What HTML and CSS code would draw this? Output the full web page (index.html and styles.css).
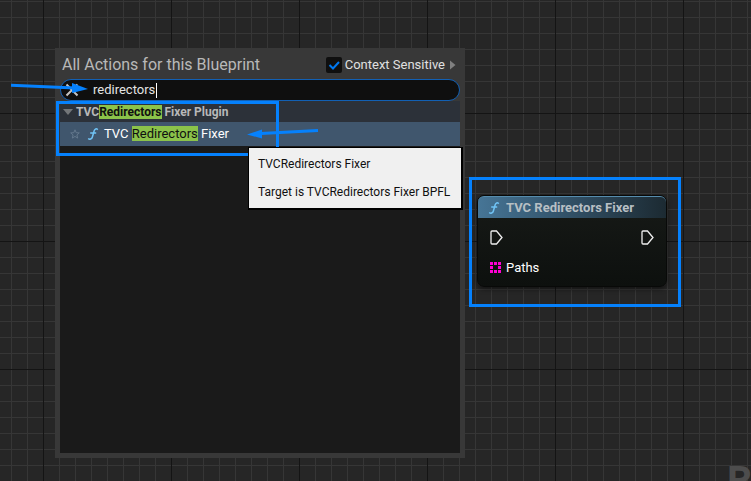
FILE: index.html
```html
<!DOCTYPE html>
<html lang="en">
<head>
<meta charset="utf-8">
<title>Blueprint actions</title>
<link rel="stylesheet" href="styles.css">
</head>
<body>
<main class="canvas">
  <section class="menu">
    <header class="menu-head">
      <h1 class="menu-title">All Actions for this Blueprint</h1>
      <label class="context" for="context"><input class="check" type="checkbox" id="context" checked>Context Sensitive</label>
      <svg class="expand" width="6" height="10" viewBox="0 0 6 10" aria-hidden="true"><path d="M0 0.5L5.5 5L0 9.5Z" fill="#808080"/></svg>
    </header>
    <div class="search">
      <button class="clear" type="button" aria-label="Clear search"><svg width="14" height="14" viewBox="0 0 14 14"><path d="M1.5 1.5L12.5 12.5M12.5 1.5L1.5 12.5" stroke="#c4c4c4" stroke-width="2"/></svg></button>
      <input class="query" type="text" aria-label="Search actions" value="redirectors">
      <span class="caret"></span>
    </div>
    <div class="results">
      <div class="category">
        <svg width="10" height="6" viewBox="0 0 10 6" aria-hidden="true"><path d="M0 0H10L5 6Z" fill="#737679"/></svg>
        <span>TVC<mark>Redirectors</mark> Fixer Plugin</span>
      </div>
      <div class="action">
        <svg class="star" width="10" height="10" viewBox="0 0 10 10" aria-hidden="true"><path d="M5 0.8L6.2 3.7L9.3 3.9L6.9 5.9L7.7 9.1L5 7.4L2.3 9.1L3.1 5.9L0.7 3.9L3.8 3.7Z" fill="none" stroke="#64788d"/></svg>
        <svg class="func" width="12" height="12" viewBox="0 0 12 12" aria-hidden="true"><path d="M10.7 1.7C9.5 0.2 7.7 0.8 7.1 3L5.3 9.2C4.8 11.1 2.6 11.8 1.2 10.5M3.2 5H9.2" fill="none" stroke="#70c3f5" stroke-width="1.5"/></svg>
        <span>TVC <mark>Redirectors</mark> Fixer</span>
      </div>
    </div>
  </section>

  <section class="node">
    <header class="node-head">
      <svg class="func" width="12" height="12" viewBox="0 0 12 12" aria-hidden="true"><path d="M10.7 1.7C9.5 0.2 7.7 0.8 7.1 3L5.3 9.2C4.8 11.1 2.6 11.8 1.2 10.5M3.2 5H9.2" fill="none" stroke="#70c3f5" stroke-width="1.5"/></svg>
      <h2 class="node-title">TVC Redirectors Fixer</h2>
    </header>
    <div class="pins">
      <svg width="13" height="15" viewBox="0 0 13 15" aria-hidden="true"><path d="M1 2Q1 1 2 1H6.5L12 7.5L6.5 14H2Q1 14 1 13Z" fill="none" stroke="#eee" stroke-width="1.3"/></svg>
      <svg width="13" height="15" viewBox="0 0 13 15" aria-hidden="true"><path d="M1 2Q1 1 2 1H6.5L12 7.5L6.5 14H2Q1 14 1 13Z" fill="none" stroke="#eee" stroke-width="1.3"/></svg>
    </div>
    <div class="param">
      <svg width="11" height="11" viewBox="0 0 11 11" aria-hidden="true"><path d="M0 0h3v3H0zM4 0h3v3H4zM8 0h3v3H8zM0 4h3v3H0zM8 4h3v3H8zM0 8h3v3H0zM4 8h3v3H4zM8 8h3v3H8z" fill="#ff00d4"/></svg>
      <span>Paths</span>
    </div>
  </section>

  <div class="box box-result"></div>
  <div class="box box-node"></div>
  <svg class="arrow arrow-search" width="80" height="14" viewBox="0 0 80 14" aria-hidden="true"><path d="M0 3.2L64 6" stroke="#0581fd" stroke-width="3"/><path d="M61 1L77 7L61 11Z" fill="#0581fd"/></svg>
  <svg class="arrow arrow-action" width="72" height="14" viewBox="0 0 72 14" aria-hidden="true"><path d="M71 3.5L14 6.5" stroke="#0581fd" stroke-width="3"/><path d="M0 7.5L15 2.5V11.5Z" fill="#0581fd"/></svg>
  <div class="tip" role="tooltip">
    <p>TVCRedirectors Fixer</p>
    <p>Target is TVCRedirectors Fixer BPFL</p>
  </div>
  <div class="watermark">B</div>
</main>
</body>
</html>
```
FILE: styles.css
```css
* { box-sizing: border-box; }
body {
  margin: 0;
  font: 13px/18px Roboto, "Liberation Sans", sans-serif;
  color: #fff;
}
h1, h2, p { margin: 0; }
.canvas {
  position: relative;
  min-height: 100vh;
  overflow: hidden;
  background-color: #262626;
  background-image:
    linear-gradient(90deg, #141414 1px, transparent 1px),
    linear-gradient(#141414 1px, transparent 1px),
    linear-gradient(90deg, #363636 1px, transparent 1px),
    linear-gradient(#363636 1px, transparent 1px);
  background-size: 128px 128px, 128px 128px, 16px 16px, 16px 16px;
  background-position: 43px 0, 0 113px, 11px 0, 0 1px;
}
.menu {
  position: absolute;
  left: 55px;
  top: 48px;
  width: 410px;
  padding: 5px;
  background: #383838;
}
.menu-head {
  display: flex;
  align-items: center;
  height: 24px;
  padding: 0 4px 0 2px;
}
.menu-title {
  flex: 1;
  font-size: 16px;
  font-weight: 400;
  color: #b8b8b8;
}
.context {
  display: flex;
  align-items: center;
  gap: 3px;
  color: #e0e0e0;
}
.check {
  appearance: none;
  width: 16px;
  height: 16px;
  margin: 0;
  border-radius: 2px;
  background: #0f0f0f url("data:image/svg+xml,%3Csvg xmlns='http://www.w3.org/2000/svg' viewBox='0 0 16 16'%3E%3Cpath d='M3.5 8L7 11.5L13 5' fill='none' stroke='%230078f0' stroke-width='2'/%3E%3C/svg%3E");
}
.expand { margin-left: 5px; }
.search {
  display: flex;
  align-items: center;
  height: 22px;
  margin-top: 2px;
  padding-left: 4px;
  border: 1px solid #1260b4;
  border-radius: 11px;
  background: #0f0f0f;
}
.clear {
  display: flex;
  padding: 0;
  border: 0;
  background: none;
}
.query {
  field-sizing: content;
  margin-left: 14px;
  padding: 0;
  border: 0;
  outline: 0;
  background: none;
  color: #e4e4e4;
  font: inherit;
}
.caret {
  width: 1px;
  height: 15px;
  margin-left: 1px;
  background: #fff;
}
.results {
  min-height: 352px;
  background: #1a1a1a;
}
.category {
  display: flex;
  align-items: center;
  gap: 3px;
  height: 21px;
  padding-left: 3px;
  background: #2c3139;
  color: #b8b8b8;
  font-size: 12px;
  font-weight: 700;
}
mark {
  background: #8bc34a;
  color: #101010;
}
.action {
  display: flex;
  align-items: center;
  height: 24px;
  padding-left: 10px;
  background: #40566d;
}
.action .func { margin: 0 5px 0 7px; }
.node {
  position: absolute;
  left: 477px;
  top: 195px;
  width: 190px;
  padding-bottom: 7px;
  border: 1px solid #080908;
  border-radius: 7px;
  background: linear-gradient(#171a17, #0d100e);
  box-shadow: 0 2px 5px #0008;
}
.node-head {
  display: flex;
  align-items: center;
  gap: 6px;
  height: 22px;
  padding-left: 10px;
  border-top: 1px solid #568cad;
  border-radius: 6px 6px 0 0;
  background: linear-gradient(90deg, #467596, #33536a 45%, #1c2a32);
}
.node-title {
  font-size: 13px;
  color: #b7bfc4;
}
.pins {
  display: flex;
  align-items: center;
  justify-content: space-between;
  height: 38px;
  padding: 0 12px;
}
.param {
  display: flex;
  align-items: center;
  gap: 5px;
  height: 23px;
  padding-left: 12px;
}
.box {
  position: absolute;
  border: 3px solid #0581fd;
}
.box-result {
  left: 56px;
  top: 101px;
  width: 223px;
  height: 55px;
}
.box-node {
  left: 469px;
  top: 177px;
  width: 212px;
  height: 130px;
}
.arrow { position: absolute; }
.arrow-search {
  left: 11px;
  top: 82px;
}
.arrow-action {
  left: 247px;
  top: 127px;
}
.tip {
  position: absolute;
  left: 248px;
  top: 147px;
  padding: 7px 11px 7px 9px;
  border: 1px solid #000;
  border-width: 1px 2px 2px 1px;
  background: #f0f0f0;
  color: #101010;
  font-size: 12px;
}
.tip p + p { margin-top: 10px; }
.watermark {
  position: absolute;
  left: 727px;
  top: 462px;
  color: #4d4d4d;
  font-size: 40px;
  font-weight: 700;
  line-height: 40px;
}
```
